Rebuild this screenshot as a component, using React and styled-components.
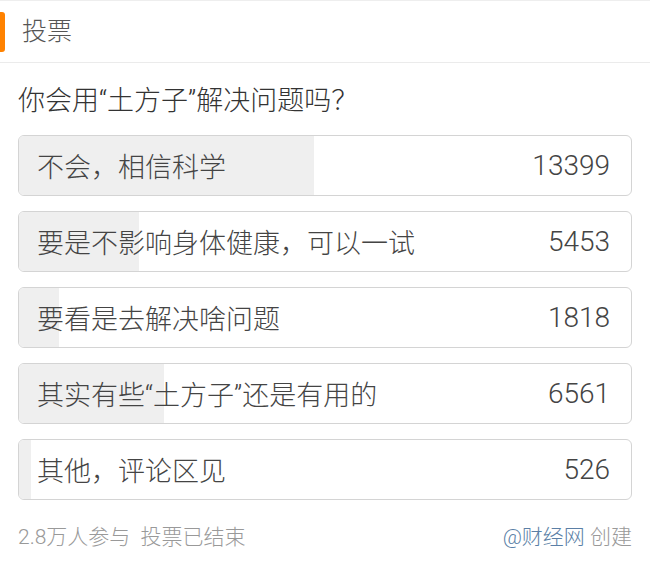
import React from 'react';
import styled, { createGlobalStyle } from 'styled-components';

const GlobalStyle = createGlobalStyle`
  body {
    margin: 0;
    background: #fff;
    font-family: Roboto, "Noto Sans CJK SC", sans-serif;
  }
`

const options = [
  { label: '不会，相信科学', count: 13399 },
  { label: '要是不影响身体健康，可以一试', count: 5453 },
  { label: '要看是去解决啥问题', count: 1818 },
  { label: '其实有些“土方子”还是有用的', count: 6561 },
  { label: '其他，评论区见', count: 526 },
];

const total = options.reduce((sum, o) => sum + o.count, 0);

export default function App() {
  return (
    <Card>
      <GlobalStyle />
      <Header>
        <Marker />
        <HeaderTitle>投票</HeaderTitle>
      </Header>
      <Question>你会用“土方子”解决问题吗？</Question>
      <OptionList>
        {options.map(o => (
          <Option key={o.label}>
            <Fill style={{ width: `${(o.count / total) * 100}%` }} />
            <Label>{o.label}</Label>
            <Count>{o.count}</Count>
          </Option>
        ))}
      </OptionList>
      <Footer>
        <span>2.8万人参与&nbsp;&nbsp;投票已结束</span>
        <span><Author>@财经网</Author> 创建</span>
      </Footer>
    </Card>
  );
}

const Card = styled.div`
  width: 650px;
  height: 567px;
  border-top: 1px solid #eeeeee;
  box-sizing: border-box;
  overflow: hidden;
`

const Header = styled.div`
  display: flex;
  align-items: center;
  height: 61px;
  border-bottom: 1px solid #ebebeb;
`

const Marker = styled.div`
  width: 5px;
  height: 40px;
  background: #ff8200;
  border-radius: 0 3px 3px 0;
  margin-right: 17px;
`

const HeaderTitle = styled.div`
  font-size: 25px;
  font-weight: 300;
  color: #555;
  line-height: 30px;
`

const Question = styled.div`
  padding: 22px 18px 0;
  font-size: 27px;
  font-weight: 300;
  line-height: 32px;
  color: #333;
`

const OptionList = styled.div`
  display: flex;
  flex-direction: column;
  gap: 15px;
  margin: 18px 18px 0;
`

const Option = styled.div`
  position: relative;
  display: flex;
  align-items: center;
  justify-content: space-between;
  height: 61px;
  box-sizing: border-box;
  padding: 0 21px 0 18px;
  border: 1px solid #d4d4d4;
  border-radius: 6px;
  overflow: hidden;
`

const Fill = styled.div`
  position: absolute;
  left: 0;
  top: 0;
  bottom: 0;
  background: #efefef;
`

const Label = styled.span`
  position: relative;
  font-size: 27px;
  font-weight: 300;
  color: #444;
`

const Count = styled.span`
  position: relative;
  font-size: 28px;
  font-weight: 300;
  color: #444;
`

const Footer = styled.div`
  display: flex;
  justify-content: space-between;
  margin: 22px 18px 0;
  font-size: 21px;
  font-weight: 300;
  line-height: 30px;
  color: #999;
`

const Author = styled.span`
  color: #5b7fa6;
`
